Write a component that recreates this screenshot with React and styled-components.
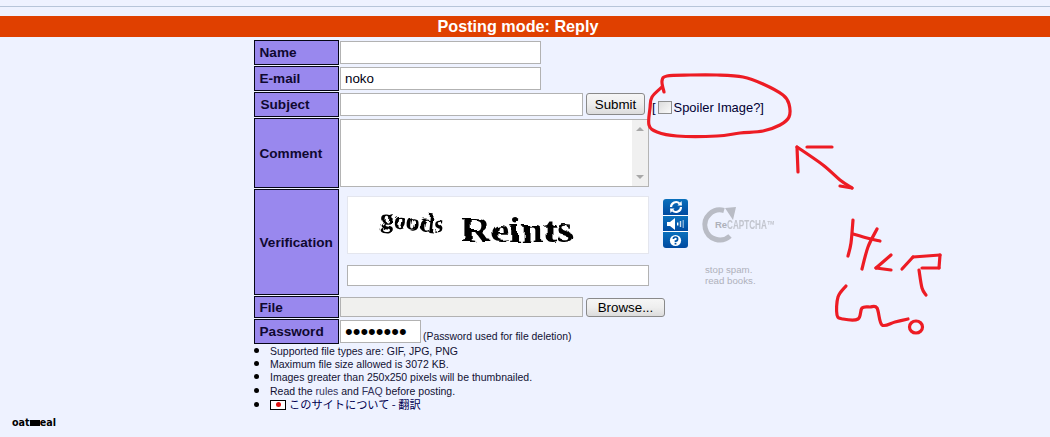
import React from "react";
import styled, { createGlobalStyle } from "styled-components";

const Global = createGlobalStyle`
  html, body { margin: 0; padding: 0; background: #eef2ff; }
  body { font-family: "Liberation Sans", Arial, sans-serif; color: #000; }
`;
const Page = styled.div`position: relative; width: 1050px; height: 437px; overflow: hidden; padding-top: 6px; box-sizing: border-box;`;
const Rule = styled.div`height: 1px; background: #b7c5d9; margin-bottom: 9px;`;
const Banner = styled.div`
  height: 21px; line-height: 21px; background: #e04000; color: #fff;
  font-size: 16.2px; font-weight: bold; text-align: center; margin-bottom: 3px;
  padding-right: 14px;
`;
const Form = styled.form`width: 542px; margin: 0 auto; display: flex; flex-direction: column; gap: 1px;`;
const Row = styled.div`display: flex; height: ${p => p.$h}px; gap: 1px;`;
const Label = styled.div`
  width: 85px; flex: none; box-sizing: border-box; border: 1.5px solid #050516;
  background: #9988ee; color: #100830; font-size: 13.6px; font-weight: bold;
  display: flex; align-items: center; padding-left: ${p => p.$pad ?? 4.5}px;
`;
const Field = styled.div`flex: 1; display: flex; align-items: flex-start; padding-top: 1px;`;
const TextInput = styled.input`
  box-sizing: border-box; width: ${p => p.$w}px; height: ${p => p.$h ?? 23}px;
  border: 1px solid #b2b2b2; background: ${p => p.$bg ?? "#fff"};
  font: 13.33px "Liberation Sans", Arial, sans-serif; color: #001; padding: 0 4px; margin: 0; display: block;
`;
const Btn = styled.button`
  box-sizing: border-box; width: ${p => p.$w}px; height: ${p => p.$h ?? 22}px; margin: ${p => p.$mt ?? 0}px 0 0 3px;
  border: 1px solid #8a8a8a; border-radius: 3px; padding: 0;
  background: linear-gradient(#f6f6f6 0%, #eeeeee 50%, #dcdcdc 100%);
  font: 13.33px "Liberation Sans", Arial, sans-serif; color: #000;
`;
const Spoiler = styled.div`
  display: flex; align-items: center; height: 22px; margin-left: 7px; margin-top: 3px;
  font-size: 12.9px; color: #000033; white-space: nowrap;
`;
const Check = styled.span`
  display: inline-block; box-sizing: border-box; width: 14px; height: 13px; margin: 0 2px 0 2px;
  border: 1.5px solid #8e8f8f; background: linear-gradient(135deg, #dcdcdc, #fafafa);
`;
const CommentBox = styled.div`
  box-sizing: border-box; width: 309px; height: 68px; border: 1px solid #b4b4b4; background: #fff; display: flex;
`;
const Area = styled.textarea`flex: 1; border: 0; outline: 0; resize: none; margin: 0; padding: 0; background: #fff;`;
const Scroll = styled.div`
  width: 16px; background: #f0f0f0; display: flex; flex-direction: column; justify-content: space-between;
  align-items: center; padding: 7px 0 7px; box-sizing: border-box;
`;
const Tri = styled.span`
  width: 0; height: 0; border-left: 4px solid transparent; border-right: 4px solid transparent;
  ${p => p.$up ? "border-bottom: 4px solid #a8a8a8;" : "border-top: 4px solid #a8a8a8;"}
`;
const CaptchaField = styled.div`flex: 1; display: flex; padding: 7px 0 0 7px;`;
const CaptchaCol = styled.div`width: 302px; display: flex; flex-direction: column; gap: 11px;`;
const CaptchaPic = styled.svg`display: block; width: 302px; height: 58px; background: #fff; box-sizing: border-box; border: 1px solid #e4e6ee;`;
const Tools = styled.div`
  width: 25px; height: 49px; margin: 3px 0 0 14px; border-radius: 3px; overflow: hidden; flex: none;
  display: flex; flex-direction: column; gap: 1px; background: #fff;
`;
const Tool = styled.div`
  flex: 1; display: flex; align-items: center; justify-content: center;
  background: linear-gradient(#0a70bc, #004aa0);
`;
const Brand = styled.div`margin-left: 12px; margin-top: 3px; width: 84px; display: flex; flex-direction: column;`;
const LogoWrap = styled.div`position: relative; height: 50px; width: 84px;`;
const LogoRe = styled.span`position: absolute; left: 15px; top: 20px; font-size: 9.5px; font-weight: bold; color: #aeb1ba;`;
const LogoCap = styled.span`position: absolute; left: 27px; top: 19px; font-size: 12px; font-weight: bold; color: #c2c5ce; transform: scaleX(0.68); transform-origin: left; white-space: nowrap;`;
const Tag = styled.div`margin: 16px 0 0 5px; font-size: 9.7px; line-height: 10.5px; color: #aeb1bb;`;
const Note = styled.span`font-size: 10.4px; color: #111133; margin: 11px 0 0 2px; white-space: nowrap;`;
const Dots = styled.span`font-size: 22px; line-height: 21px; display: block; color: #000;`;
const Rules = styled.ul`margin: -2px 0 0 0; padding: 0 0 0 16px; list-style: disc; font-size: 10.5px; color: #111133;`;
const Item = styled.li`height: ${p => p.$h ?? 13}px; line-height: 13px; white-space: nowrap; &::marker { color: #000; font-size: 16px; }`;
const LastItem = styled(Item)`height: 14px; line-height: 14px;`;
const RuleLink = styled.a`color: #34345c;`;
const Flag = styled.span`
  display: inline-flex; width: 16px; height: 10px; border: 1px solid #000; background: #fff; box-sizing: border-box;
  align-items: center; justify-content: center; vertical-align: 2px; margin-right: 3px;
  &::after { content: ""; width: 5px; height: 5px; border-radius: 50%; background: #e01010; }
`;
const Jp = styled.span`font-family: "Noto Sans CJK JP", sans-serif; font-size: 11.2px; color: #000050;`;
const Footer = styled.div`margin: 6px 0 0 12px; font: bold 9.6px "DejaVu Sans", sans-serif; color: #000;`;
const Redact = styled.span`background: linear-gradient(#000, #000) center / 100% 6px no-repeat;`;
const Marks = styled.svg`position: absolute; left: 0; top: 0; pointer-events: none;`;

const smooth = pts => {
  let d = `M${pts[0][0]} ${pts[0][1]}`;
  for (let i = 0; i < pts.length - 1; i++) {
    const p0 = pts[i - 1] || pts[i], p1 = pts[i], p2 = pts[i + 1], p3 = pts[i + 2] || p2;
    d += ` C${p1[0] + (p2[0] - p0[0]) / 6} ${p1[1] + (p2[1] - p0[1]) / 6} ${p2[0] - (p3[0] - p1[0]) / 6} ${p2[1] - (p3[1] - p1[1]) / 6} ${p2[0]} ${p2[1]}`;
  }
  return d;
};

const marks = [
  [[664, 92], [662, 81], [667, 76], [690, 75], [717, 75], [743, 77], [763, 84], [783, 95], [789, 104], [789, 117], [780, 125], [763, 131], [740, 133], [717, 136], [677, 136], [657, 132], [649, 125], [650, 108], [652, 97], [662, 87]],
  [[798, 172], [797, 147]],
  [[797, 147], [823, 165], [840, 180], [852, 188]],
  [[840, 186], [852, 188]],
  [[807, 147], [832, 147]],
  [[853, 220], [851, 243], [848, 256]],
  [[853, 234], [867, 238], [880, 241]],
  [[877, 229], [868, 247], [862, 269]],
  [[891, 255], [876, 268]],
  [[876, 268], [891, 270]],
  [[902, 269], [913, 257]],
  [[913, 257], [940, 255]],
  [[940, 255], [939, 268]],
  [[939, 268], [922, 268]],
  [[919, 270], [922, 288], [926, 295]],
  [[846, 286], [838, 297], [837, 315], [843, 319], [858, 319], [862, 308], [870, 307], [877, 308], [882, 325], [895, 322], [908, 319]],
];

export default function App() {
  return (
    <Page>
      <Global />
      <Rule />
      <Banner>Posting mode: Reply</Banner>
      <Form>
        <Row $h={25}>
          <Label>Name</Label>
          <Field><TextInput $w={201} /></Field>
        </Row>
        <Row $h={25}>
          <Label>E-mail</Label>
          <Field><TextInput $w={201} defaultValue="noko" /></Field>
        </Row>
        <Row $h={25}>
          <Label $pad={5.5}>Subject</Label>
          <Field>
            <TextInput $w={243} />
            <Btn $w={59}>Submit</Btn>
            <Spoiler>[<Check />Spoiler Image?]</Spoiler>
          </Field>
        </Row>
        <Row $h={70}>
          <Label>Comment</Label>
          <Field>
            <CommentBox>
              <Area />
              <Scroll><Tri $up /><Tri /></Scroll>
            </CommentBox>
          </Field>
        </Row>
        <Row $h={106}>
          <Label>Verification</Label>
          <CaptchaField>
            <CaptchaCol>
              <CaptchaPic viewBox="0 0 302 58">
                <defs>
                  <filter id="warp" x="-10%" y="-30%" width="120%" height="160%">
                    <feTurbulence type="fractalNoise" baseFrequency="0.08" numOctaves="2" seed="4" />
                    <feDisplacementMap in="SourceGraphic" scale="6" />
                  </filter>
                </defs>
                <g filter="url(#warp)" fontFamily="Liberation Serif, serif" fill="#000">
                  <text x="29" y="31" fontSize="27" fontWeight="bold" transform="rotate(6 29 31)" textLength="66" lengthAdjust="spacingAndGlyphs">goods</text>
                  <text x="113" y="47" fontSize="37" fontWeight="bold" textLength="116" lengthAdjust="spacingAndGlyphs">Reints</text>
                </g>
              </CaptchaPic>
              <TextInput $w={302} $h={21} />
            </CaptchaCol>
            <Tools>
              <Tool>
                <svg width="14" height="14" viewBox="0 0 14 14" fill="none" stroke="#fff" strokeWidth="2.2">
                  <path d="M2 7 A5 5 0 0 1 10.5 3.5" />
                  <path d="M12 7 A5 5 0 0 1 3.5 10.5" />
                  <path d="M8.5 5.5 L13 5.5 L12.5 1 Z" fill="#fff" stroke="none" />
                  <path d="M5.5 8.5 L1 8.5 L1.5 13 Z" fill="#fff" stroke="none" />
                </svg>
              </Tool>
              <Tool>
                <svg width="18" height="12" viewBox="0 0 18 12" fill="#fff">
                  <path d="M0 4 L3 4 L8 0 L8 12 L3 8 L0 8 Z" />
                  <rect x="10" y="4.5" width="1.4" height="3" />
                  <rect x="12.8" y="3" width="1.4" height="6" opacity="0.8" />
                  <rect x="15.6" y="2" width="1.2" height="8" opacity="0.6" />
                </svg>
              </Tool>
              <Tool>
                <svg width="13" height="13" viewBox="0 0 13 13">
                  <circle cx="6.5" cy="6.5" r="5.6" fill="#fff" />
                  <path d="M4.4 5 A2.1 2 0 1 1 6.5 7 L6.5 8" fill="none" stroke="#0054a6" strokeWidth="1.7" />
                  <rect x="5.6" y="8.8" width="1.8" height="1.7" fill="#0054a6" />
                </svg>
              </Tool>
            </Tools>
            <Brand>
              <LogoWrap>
                <svg width="40" height="50" viewBox="0 0 40 50">
                  <path d="M24 11.5 A15 15 0 1 0 30 37" fill="none" stroke="#b9bcc5" strokeWidth="5" />
                  <path d="M25 9 L36 8 L33 21 Z" fill="#b9bcc5" />
                </svg>
                <LogoRe>Re</LogoRe>
                <LogoCap>CAPTCHA™</LogoCap>
              </LogoWrap>
              <Tag>stop spam.<br />read books.</Tag>
            </Brand>
          </CaptchaField>
        </Row>
        <Row $h={22}>
          <Label>File</Label>
          <Field>
            <TextInput $w={243} $h={20} $bg="#f0f0ee" />
            <Btn $w={79} $h={19} $mt={1}>Browse...</Btn>
          </Field>
        </Row>
        <Row $h={25}>
          <Label>Password</Label>
          <Field>
            <TextInput as="div" $w={81} $h={23}><Dots>••••••••</Dots></TextInput>
            <Note>(Password used for file deletion)</Note>
          </Field>
        </Row>
        <Rules>
          <Item>Supported file types are: GIF, JPG, PNG</Item>
          <Item>Maximum file size allowed is 3072 KB.</Item>
          <Item $h={14}>Images greater than 250x250 pixels will be thumbnailed.</Item>
          <Item $h={14}>Read the <RuleLink>rules</RuleLink> and <RuleLink>FAQ</RuleLink> before posting.</Item>
          <LastItem><Flag /><Jp>このサイトについて - 翻訳</Jp></LastItem>
        </Rules>
      </Form>
      <Footer>oat<Redact>m</Redact>eal</Footer>
      <Marks width="1050" height="437" fill="none" stroke="#ed1c24" strokeWidth="3.2" strokeLinecap="round" strokeLinejoin="round">
        {marks.map(p => <path key={p.join()} d={smooth(p)} />)}
        <ellipse cx="916" cy="327" rx="6.5" ry="6" />
      </Marks>
    </Page>
  );
}
